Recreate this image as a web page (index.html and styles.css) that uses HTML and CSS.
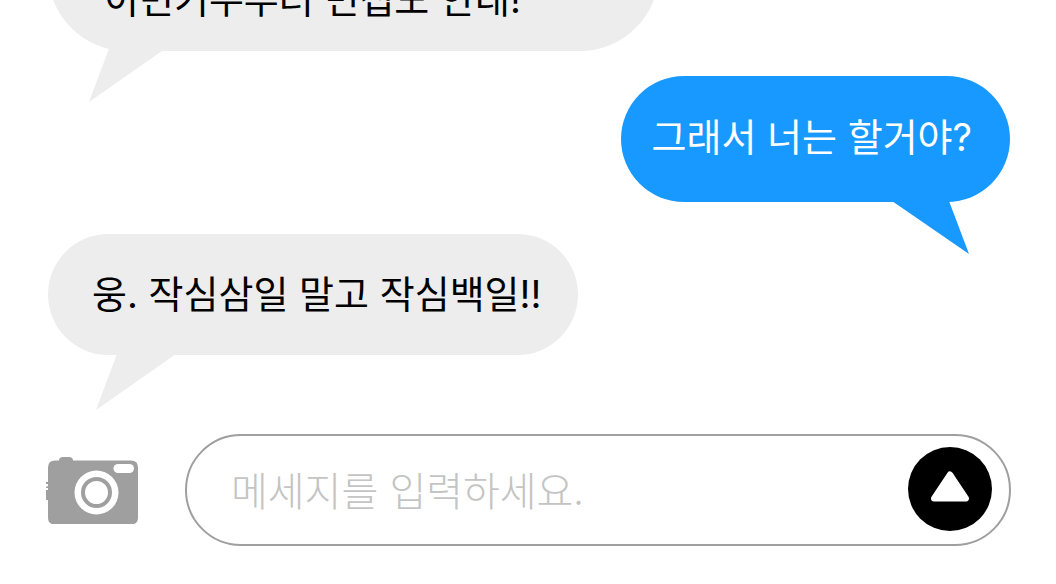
FILE: index.html
```html
<!DOCTYPE html>
<html lang="ko">
<head>
<meta charset="utf-8">
<meta name="viewport" content="width=device-width, initial-scale=1">
<title>채팅</title>
<link rel="stylesheet" href="styles.css">
</head>
<body>
<main class="chat">
  <section class="messages">
    <div class="bubble received large">
      <p class="text">이번기수부터 면접도 안대!</p>
      <svg class="tail" viewBox="0 0 80 56" aria-hidden="true"><path d="M21 0H80L0 56Z"/></svg>
    </div>
    <div class="bubble sent">
      <p class="text">그래서 너는 할거야?</p>
      <svg class="tail" viewBox="0 0 80 54" aria-hidden="true"><path d="M2 0H59L79 53Z"/></svg>
    </div>
    <div class="bubble received">
      <p class="text">웅. 작심삼일 말고 작심백일!!</p>
      <svg class="tail" viewBox="0 0 80 56" aria-hidden="true"><path d="M21 0H80L0 56Z"/></svg>
    </div>
  </section>
  <form class="composer">
    <button class="camera" type="button" aria-label="사진">
      <svg viewBox="0 0 92 68" aria-hidden="true">
        <path fill="#9f9f9f" d="M9 4.500h4q0-3.500 4-3.500h6q4 0 4 3.500h58q7 0 7 7v50q0 7-7 7H9q-7 0-7-7V44H0V34h2v-2H0v-1l2-1v-2H0v-2h2V11.500q0-7 7-7z"/>
        <rect x="67.500" y="8" width="20.500" height="9" rx="4.500" fill="#fff"/>
        <circle cx="50.500" cy="36.500" r="22" fill="#fff"/>
        <circle cx="50.500" cy="36.500" r="13.500" fill="none" stroke="#9f9f9f" stroke-width="4"/>
      </svg>
    </button>
    <div class="field">
      <input class="input" type="text" aria-label="메세지" placeholder="메세지를 입력하세요.">
      <button class="send" type="submit" aria-label="보내기">
        <svg viewBox="0 0 84 84" aria-hidden="true"><path fill="#fff" stroke="#fff" stroke-width="6" stroke-linejoin="round" d="M42 27.500L58 51.500H26Z"/></svg>
      </button>
    </div>
  </form>
</main>
</body>
</html>
```
FILE: styles.css
```css
* { box-sizing: border-box; }

body {
  margin: 0;
  background: #fff;
  color: #000;
  font-family: Inter, "Noto Sans CJK KR", sans-serif;
}

.chat {
  display: flex;
  flex-direction: column;
  height: 100vh;
  padding: 0 45px 38px 46px;
  overflow: hidden;
}

.messages {
  flex: 1;
  display: flex;
  flex-direction: column;
  justify-content: flex-end;
  align-items: flex-start;
  min-height: 0;
  padding: 0 1px 79px 2px;
}

.bubble {
  position: relative;
  flex: none;
  padding: 30px 37px 31px 44px;
  border-radius: 80px;
  font-size: 38px;
  line-height: 60px;
}

.text { margin: 0; white-space: nowrap; }

.tail {
  position: absolute;
  top: calc(100% - 1px);
  width: 80px;
  height: 56px;
}

.received { background: #ededed; }
.received .tail { left: 48px; fill: #ededed; }

.large { padding: 76px 138px 22px 56px; }
.large .tail { left: 41px; top: calc(100% - 5px); }

.sent {
  align-self: flex-end;
  margin: 25px 0 32px;
  padding: 31px 38px 35px 31px;
  background: #1899ff;
  color: #fff;
}
.sent .tail { right: 40px; height: 54px; fill: #1899ff; }

.composer {
  display: flex;
  align-items: center;
  gap: 47px;
}

button { padding: 0; border: 0; cursor: pointer; }

.camera { flex: none; width: 92px; height: 68px; background: none; }
.camera svg, .send svg { display: block; width: 100%; height: 100%; }

.field {
  flex: 1;
  display: flex;
  align-items: flex-start;
  min-width: 0;
  height: 112px;
  padding: 11px 17px 0 44px;
  border: 2px solid #9f9f9f;
  border-radius: 56px;
}

.input {
  flex: 1;
  min-width: 0;
  height: 84px;
  padding: 0;
  border: 0;
  outline: 0;
  background: none;
  font: 300 40px "Noto Sans CJK KR", sans-serif;
}
.input::placeholder { color: #c4c4c4; opacity: 1; }

.send {
  flex: none;
  width: 84px;
  height: 84px;
  border-radius: 50%;
  background: #000;
}
```
